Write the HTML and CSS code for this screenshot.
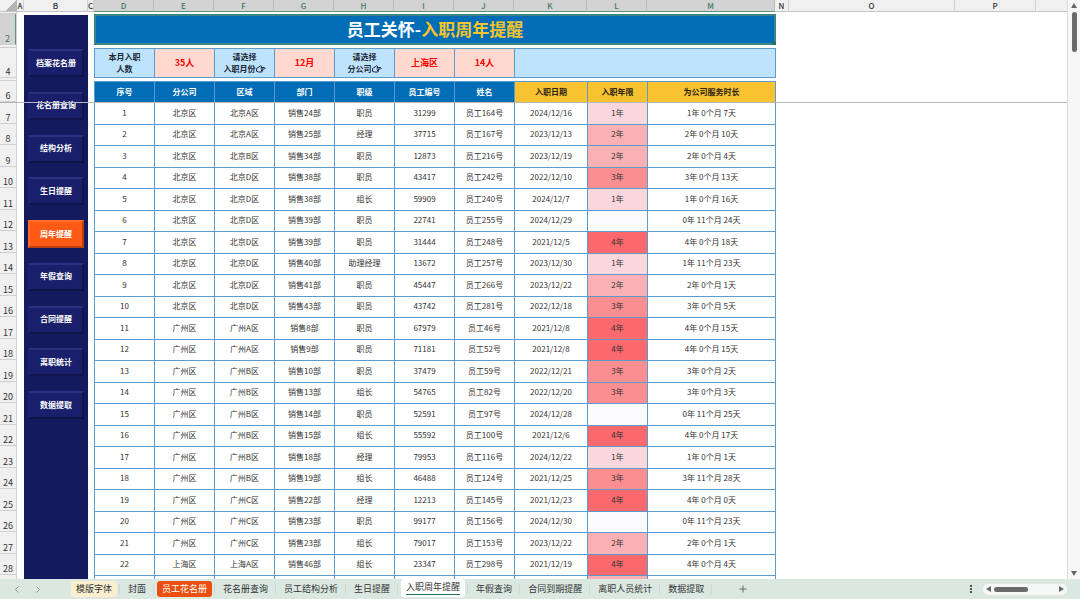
FILE: index.html
```html
<!DOCTYPE html>
<html lang="zh-CN">
<head>
  <meta charset="UTF-8" />
  <meta name="viewport" content="width=device-width, initial-scale=1.0"/>
  <title>员工关怀-入职周年提醒</title>
  <link rel="stylesheet" href="styles.css">
</head>
<body>

  <div class="workbook">
    <div class="sheet">

      <div class="grid-area">
        <!-- Column letters -->
        <div class="col-heads">
          <span class="corner"></span>
          <span class="col w-a">A</span>
          <span class="col w-b">B</span>
          <span class="col w-c">C</span>
          <span class="col w-std selected">D</span>
          <span class="col w-std selected">E</span>
          <span class="col w-std selected">F</span>
          <span class="col w-std selected">G</span>
          <span class="col w-std selected">H</span>
          <span class="col w-std selected">I</span>
          <span class="col w-std selected">J</span>
          <span class="col w-k selected">K</span>
          <span class="col w-std selected">L</span>
          <span class="col w-m selected">M</span>
          <span class="col w-n">N</span>
          <span class="col w-o">O</span>
          <span class="col w-p">P</span>
          <span class="col w-rest"></span>
        </div>

        <div class="sheet-body">
          <div class="row-heads" id="row-heads">
            <span class="row r1">1</span>
            <span class="row r2 selected">2</span>
            <span class="row r3">3</span>
            <span class="row r4">4</span>
            <span class="row r3">5</span>
            <span class="row r6">6</span>
          </div>

          <nav class="side-nav">
            <div class="side-links">
              <a href="#">档案花名册</a>
              <a href="#">花名册查询</a>
              <a href="#">结构分析</a>
              <a href="#">生日提醒</a>
              <a href="#" class="active">周年提醒</a>
              <a href="#">年假查询</a>
              <a href="#">合同提醒</a>
              <a href="#">离职统计</a>
              <a href="#">数据提取</a>
            </div>
          </nav>

          <main class="content">
            <h1 class="title">员工关怀-<span>入职周年提醒</span><i class="fill-handle"></i></h1>

            <div class="filters">
              <span class="f-label">本月入职<br>人数</span>
              <span class="f-value">35人</span>
              <label class="f-label" for="month">请选择<br>入职月份<svg class="hand" viewBox="0 0 20 16"><path d="M1 7 L6 4 L9 1.5 L11 2.5 L10 5 H17 Q19.5 6.5 17 8 H13.5 L13 11 L12 14 H5 L1 12.5 Z"/><path d="M9 8 H13.5 M10 11 H13"/></svg></label>
              <select class="f-value" id="month">
                <option>12月</option>
              </select>
              <label class="f-label" for="branch">请选择<br>分公司<svg class="hand" viewBox="0 0 20 16"><path d="M1 7 L6 4 L9 1.5 L11 2.5 L10 5 H17 Q19.5 6.5 17 8 H13.5 L13 11 L12 14 H5 L1 12.5 Z"/><path d="M9 8 H13.5 M10 11 H13"/></svg></label>
              <select class="f-value" id="branch">
                <option>上海区</option>
              </select>
              <span class="f-value">14人</span>
              <span class="f-blank"></span>
            </div>

            <table class="staff">
              <colgroup>
                <col class="w-std"><col class="w-std"><col class="w-std"><col class="w-std">
                <col class="w-std"><col class="w-std"><col class="w-std">
                <col class="w-k"><col class="w-std"><col class="w-m">
              </colgroup>
              <thead>
                <tr>
                  <th>序号</th>
                  <th>分公司</th>
                  <th>区域</th>
                  <th>部门</th>
                  <th>职级</th>
                  <th>员工编号</th>
                  <th>姓名</th>
                  <th class="gold">入职日期</th>
                  <th class="gold">入职年限</th>
                  <th class="gold">为公司服务时长</th>
                </tr>
              </thead>
              <tbody id="staff-rows"></tbody>
            </table>
          </main>

          <div class="freeze-line"></div>
        </div>
      </div>

      <div class="v-scroll">
        <svg viewBox="0 0 6 5"><path d="M3 0 L6 5 H0 Z"/></svg>
        <div class="v-thumb"></div>
        <svg class="down" viewBox="0 0 6 5"><path d="M0 0 H6 L3 5 Z"/></svg>
      </div>
    </div>

    <!-- Sheet tabs -->
    <footer class="tab-bar">
      <div class="tab-arrows">
        <button type="button" aria-label="上一个"><svg viewBox="0 0 4 7"><path d="M3.5 .5 L.5 3.5 L3.5 6.5"/></svg></button>
        <button type="button" aria-label="下一个"><svg viewBox="0 0 4 7"><path d="M.5 .5 L3.5 3.5 L.5 6.5"/></svg></button>
      </div>
      <ul class="tabs">
        <li><a href="#" class="cream">模版字体</a></li>
        <li><a href="#">封面</a></li>
        <li><a href="#" class="orange">员工花名册</a></li>
        <li><a href="#">花名册查询</a></li>
        <li><a href="#">员工结构分析</a></li>
        <li><a href="#">生日提醒</a></li>
        <li><a href="#" class="current"><span>入职周年提醒</span></a></li>
        <li><a href="#">年假查询</a></li>
        <li><a href="#">合同到期提醒</a></li>
        <li><a href="#">离职人员统计</a></li>
        <li><a href="#">数据提取</a></li>
      </ul>
      <button type="button" class="add-tab" aria-label="新建工作表"><svg viewBox="0 0 8 8"><path d="M4 .5 V7.5 M.5 4 H7.5"/></svg></button>
      <div class="tab-right">
        <svg class="dots" viewBox="0 0 2 8"><path d="M0 0h2v2H0z M0 3h2v2H0z M0 6h2v2H0z"/></svg>
        <div class="h-scroll">
          <svg viewBox="0 0 5 6"><path d="M5 0 V6 L0 3 Z"/></svg>
          <div class="h-thumb"></div>
          <svg class="right" viewBox="0 0 5 6"><path d="M0 0 L5 3 L0 6 Z"/></svg>
        </div>
      </div>
    </footer>
  </div>

  <script>
    // 分公司, 区域, 部门, 职级, 员工编号, 姓名, 入职日期, 服务时长
    const staff = [
      ["北京区", "北京A区", "销售24部", "职员", "31299", "员工164号", "2024/12/16", "1年 0个月 7天"],
      ["北京区", "北京A区", "销售25部", "经理", "37715", "员工167号", "2023/12/13", "2年 0个月 10天"],
      ["北京区", "北京B区", "销售34部", "职员", "12873", "员工216号", "2023/12/19", "2年 0个月 4天"],
      ["北京区", "北京D区", "销售38部", "职员", "43417", "员工242号", "2022/12/10", "3年 0个月 13天"],
      ["北京区", "北京D区", "销售38部", "组长", "59909", "员工240号", "2024/12/7", "1年 0个月 16天"],
      ["北京区", "北京D区", "销售39部", "职员", "22741", "员工255号", "2024/12/29", "0年 11个月 24天"],
      ["北京区", "北京D区", "销售39部", "职员", "31444", "员工248号", "2021/12/5", "4年 0个月 18天"],
      ["北京区", "北京D区", "销售40部", "助理经理", "13672", "员工257号", "2023/12/30", "1年 11个月 23天"],
      ["北京区", "北京D区", "销售41部", "职员", "45447", "员工266号", "2023/12/22", "2年 0个月 1天"],
      ["北京区", "北京D区", "销售43部", "职员", "43742", "员工281号", "2022/12/18", "3年 0个月 5天"],
      ["广州区", "广州A区", "销售8部", "职员", "67979", "员工46号", "2021/12/8", "4年 0个月 15天"],
      ["广州区", "广州A区", "销售9部", "职员", "71181", "员工52号", "2021/12/8", "4年 0个月 15天"],
      ["广州区", "广州B区", "销售10部", "职员", "37479", "员工59号", "2022/12/21", "3年 0个月 2天"],
      ["广州区", "广州B区", "销售13部", "组长", "54765", "员工82号", "2022/12/20", "3年 0个月 3天"],
      ["广州区", "广州B区", "销售14部", "职员", "52591", "员工97号", "2024/12/28", "0年 11个月 25天"],
      ["广州区", "广州B区", "销售15部", "组长", "55592", "员工100号", "2021/12/6", "4年 0个月 17天"],
      ["广州区", "广州B区", "销售18部", "经理", "79953", "员工116号", "2024/12/22", "1年 0个月 1天"],
      ["广州区", "广州B区", "销售19部", "组长", "46488", "员工124号", "2021/12/25", "3年 11个月 28天"],
      ["广州区", "广州C区", "销售22部", "经理", "12213", "员工145号", "2021/12/23", "4年 0个月 0天"],
      ["广州区", "广州C区", "销售23部", "职员", "99177", "员工156号", "2024/12/30", "0年 11个月 23天"],
      ["广州区", "广州C区", "销售23部", "组长", "79017", "员工153号", "2023/12/22", "2年 0个月 1天"],
      ["上海区", "上海A区", "销售46部", "组长", "23347", "员工298号", "2021/12/19", "4年 0个月 4天"]
    ];

    const tbody = document.getElementById('staff-rows');
    const rowHeads = document.getElementById('row-heads');

    function addRow(cells, years) {
      const tr = document.createElement('tr');
      cells.forEach((text, i) => {
        const td = document.createElement('td');
        td.textContent = text;
        if (i === 8) td.className = `years-${years}`;
        tr.appendChild(td);
      });
      tbody.appendChild(tr);
    }

    staff.forEach((p, i) => {
      const years = p[7].charAt(0);
      addRow([i + 1, ...p.slice(0, 7), years === '0' ? '' : `${years}年`, p[7]], years);

      const head = document.createElement('span');
      head.className = i % 2 ? 'row short' : 'row tall';
      head.textContent = i + 7;
      rowHeads.appendChild(head);
    });

    // next row, cut off by the tab bar
    addRow(Array(10).fill(''), 2);
  </script>
</body>
</html>
```
FILE: styles.css
```css
* {
  box-sizing: border-box;
}

body {
  margin: 0;
  font-family: "Noto Sans CJK SC", "Noto Sans", sans-serif;
  font-size: 8px;
  color: #333;
  background-color: #fff;
}

a {
  color: inherit;
  text-decoration: none;
}

button {
  display: flex;
  padding: 0;
  border: none;
  background: none;
}

.workbook {
  display: flex;
  flex-direction: column;
  height: 100vh;
  overflow: hidden;
}

.sheet {
  display: flex;
  flex: 1;
  min-height: 0;
}

.grid-area {
  display: flex;
  flex-direction: column;
  flex: 1;
  min-width: 0;
  overflow: hidden;
}

/* column widths */
.w-a { width: 7px; }
.w-b { width: 64px; }
.w-c { width: 6px; }
.w-std { width: 60px; }
.w-k { width: 73px; }
.w-m { width: 128px; }
.w-n { width: 14px; }
.w-o { width: 166px; }
.w-p { width: 81px; }
.w-rest { flex: 1; }

.col-heads {
  display: flex;
  flex: none;
  height: 12px;
  background-color: #f0f0f0;
}

.corner {
  width: 17px;
  border-bottom: 1px solid #c4c4c4;
  background: linear-gradient(135deg, #f0f0f0 60%, #b4b4b4 60%);
}

.col {
  display: flex;
  justify-content: center;
  align-items: center;
  flex-shrink: 0;
  border-right: 1px solid #d0d0d0;
  border-bottom: 1px solid #c4c4c4;
  font-size: 8px;
  font-weight: 500;
  line-height: 11px;
}

.col.w-rest {
  border-right: none;
}

.col.selected {
  background-color: #d3d3d3;
  border-right-color: #bcbcbc;
  border-bottom-color: #5d9578;
  color: #3d7a5c;
}

.sheet-body {
  position: relative;
  display: flex;
  flex: 1;
  min-height: 0;
}

.row-heads {
  flex: none;
  width: 17px;
  background-color: #f0f0f0;
  border-right: 1px solid #d0d0d0;
}

.row {
  display: flex;
  align-items: flex-end;
  justify-content: center;
  overflow: hidden;
  border-bottom: 1px solid #d0d0d0;
  font-size: 9px;
  line-height: 10px;
}

.row.selected {
  background-color: #d3d3d3;
  border-right: 1px solid #5d9578;
  color: #3d7a5c;
}

.r1 { height: 2px; }
.r2 { height: 31px; }
.r3 { height: 3px; }
.r4 { height: 30px; }
.r6 { height: 21px; }
.row.tall { height: 22px; }
.row.short { height: 21px; }

/* left menu */
.side-nav {
  flex: none;
  width: 64px;
  margin: 3px 6px 0 7px;
  padding: 34px 4px 0;
  background-color: #131a5e;
}

.side-links {
  display: flex;
  flex-direction: column;
  justify-content: space-between;
  height: 370px;
}

.side-links a {
  display: flex;
  align-items: center;
  justify-content: center;
  height: 28px;
  padding-bottom: 2px;
  border: 2px solid;
  border-color: #2b3182 #0f144a #0f144a #1c2272;
  background-color: #191f6b;
  color: #fff;
  font-weight: bold;
}

.side-links a.active {
  border-color: #ff7030 #b8410f #b8410f #ff6a26;
  background-color: #ff5a14;
}

.content {
  flex: none;
  width: 682px;
  padding-top: 2px;
}

.title {
  position: relative;
  display: flex;
  align-items: center;
  justify-content: center;
  height: 31px;
  margin: 0 0 3px;
  padding-bottom: 2px;
  border: 2px solid #3a8585;
  background-color: #006db6;
  color: #fff;
  font-size: 17px;
  line-height: 24px;
}

.title span {
  color: #f5c42c;
}

.fill-handle {
  position: absolute;
  right: -2px;
  bottom: -2px;
  width: 3px;
  height: 3px;
  background-color: #217346;
}

.filters {
  display: grid;
  grid-template-columns: repeat(7, 60px) 1fr;
  height: 30px;
  margin-bottom: 3px;
  border: solid #5b9ccd;
  border-width: 1px 1px 1px 0;
}

.f-label,
.f-value,
.f-blank {
  border: 0 solid #5b9ccd;
  border-left-width: 1px;
}

.f-label {
  padding-top: 2px;
  background-color: #bee3ff;
  color: #1c2733;
  font-weight: bold;
  line-height: 12px;
  text-align: center;
}

.f-value {
  width: 100%;
  margin: 0;
  padding: 0;
  appearance: none;
  border-radius: 0;
  background-color: #ffd9cf;
  color: #ff0000;
  font-family: inherit;
  font-size: 9px;
  font-weight: bold;
  line-height: 28px;
  text-align: center;
  text-align-last: center;
}

.f-blank {
  background-color: #bee3ff;
}

.hand {
  width: 10px;
  height: 8px;
  vertical-align: -1px;
  fill: none;
  stroke: #1c2733;
  stroke-width: 2;
}

/* staff table */
.staff {
  width: 100%;
  table-layout: fixed;
  border-spacing: 0;
  border-right: 1px solid #5b9ccd;
}

.staff th,
.staff td {
  padding: 0;
  border: 0 solid #5b9ccd;
  border-width: 1px 0 0 1px;
  line-height: 12px;
  text-align: center;
  white-space: nowrap;
}

.staff th {
  height: 21px;
  background-color: #006db6;
  color: #fff;
}

.staff th.gold {
  background-color: #f8c230;
  color: #2a2414;
}

.staff td {
  height: 22px;
  padding-bottom: 2px;
}

.staff tr:nth-child(even) td {
  height: 21px;
}

.staff .years-0 { background-color: #fcfcff; }
.staff .years-1 { background-color: #fad7dc; }
.staff .years-2 { background-color: #fab1b5; }
.staff .years-3 { background-color: #fa8e91; }
.staff .years-4 { background-color: #f9696d; }

.freeze-line {
  position: absolute;
  top: 90px;
  left: 0;
  right: 0;
  height: 1px;
  background-color: #b4b8bc;
}

.v-scroll {
  display: flex;
  flex-direction: column;
  align-items: center;
  gap: 4px;
  width: 13px;
  padding: 3px 0;
  border-left: 1px solid #dcdcdc;
  background-color: #f6f8f7;
}

.v-scroll svg {
  width: 6px;
  height: 5px;
  fill: #666;
}

.v-scroll .down {
  margin-top: auto;
}

.v-thumb {
  width: 5px;
  height: 40px;
  border-radius: 3px;
  background-color: #6b6b6b;
}

/* bottom bar */
.tab-bar {
  display: flex;
  align-items: center;
  flex: none;
  height: 20px;
  padding: 0 13px 0 15px;
  background-color: #dbe8e2;
}

.tab-arrows {
  display: flex;
  gap: 17px;
  width: 53px;
}

.tab-arrows svg {
  width: 4px;
  height: 7px;
  fill: none;
  stroke: #8d9692;
}

.tabs {
  display: flex;
  height: 20px;
  margin: 0;
  padding: 0;
  list-style: none;
  font-size: 9px;
}

.tabs li {
  padding: 0 3px;
  background: linear-gradient(#cddad4, #cddad4) right center / 1px 10px no-repeat;
}

.tabs a {
  display: block;
  margin-top: 2px;
  padding: 0 5px;
  border-radius: 3px;
  line-height: 16px;
  white-space: nowrap;
}

.tabs .cream {
  background-color: #fcefd0;
}

.tabs .orange {
  background-color: #eb4f10;
  color: #fff;
}

.tabs .current {
  height: 18px;
  margin-top: 0;
  background-color: #fff;
}

.tabs .current span {
  display: block;
  height: 16px;
  border-bottom: 1px solid #217346;
}

.add-tab {
  margin-left: 27px;
}

.add-tab svg {
  width: 8px;
  height: 8px;
  fill: none;
  stroke: #666;
}

.tab-right {
  display: flex;
  align-items: center;
  gap: 11px;
  margin-left: auto;
}

.dots {
  width: 2px;
  height: 8px;
  fill: #555;
}

.h-scroll {
  display: flex;
  align-items: center;
  gap: 3px;
  width: 84px;
  height: 11px;
  padding: 0 3px;
  border-radius: 5px;
  background-color: #f6f8f7;
}

.h-scroll svg {
  width: 5px;
  height: 6px;
  fill: #666;
}

.h-scroll .right {
  margin-left: auto;
}

.h-thumb {
  width: 34px;
  height: 5px;
  border-radius: 3px;
  background-color: #6b6b6b;
}
```
